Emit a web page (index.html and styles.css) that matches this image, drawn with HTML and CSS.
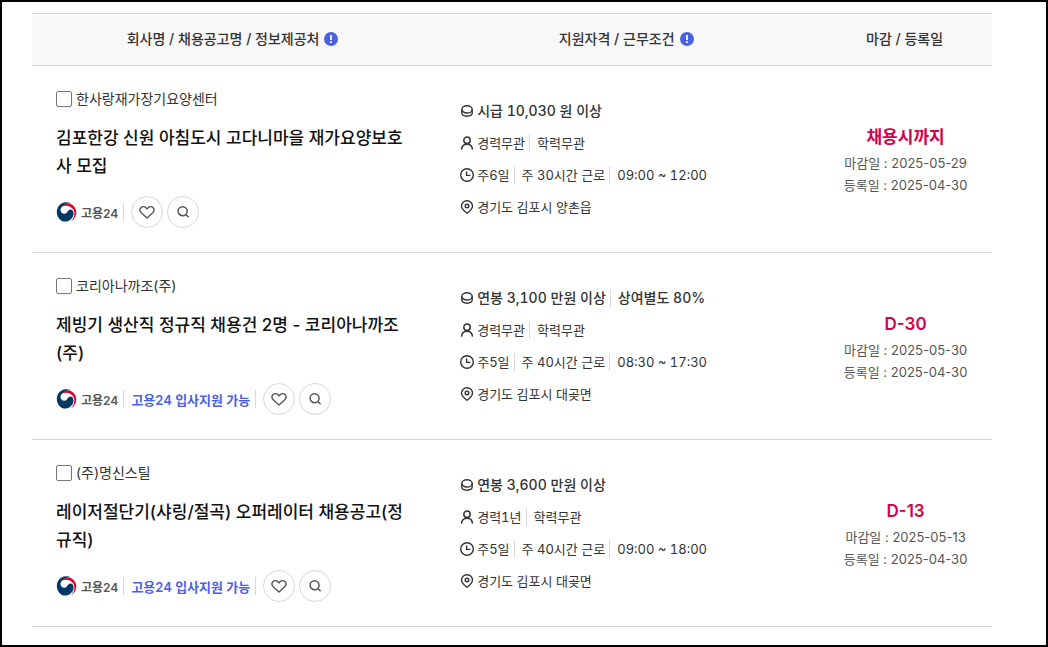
FILE: index.html
```html
<!DOCTYPE html>
<html lang="ko">
<head>
<meta charset="utf-8">
<meta name="viewport" content="width=device-width, initial-scale=1">
<title>채용정보</title>
<link rel="stylesheet" href="styles.css">
</head>
<body>
<svg class="sprite" aria-hidden="true">
  <symbol id="info" viewBox="0 0 14 14"><circle cx="7" cy="7" r="7" fill="#4b62df"/><path d="M7 3v5M7 9.300v1.800" stroke="#e8ebff" stroke-width="2"/></symbol>
  <symbol id="coin" viewBox="0 0 14 14"><g fill="none" stroke="currentColor" stroke-width="1.4"><ellipse cx="7" cy="5.4" rx="5.2" ry="3.600"/><path d="M1.800 5.400v3.400c0 2 2.100 3.400 5.200 3.400s5.200-1.400 5.200-3.400V5.400"/></g></symbol>
  <symbol id="person" viewBox="0 0 14 14"><g fill="none" stroke="currentColor" stroke-width="1.5"><circle cx="7" cy="4.2" r="3.2"/><path d="M1.500 13.600c.2-3.300 2.300-5.400 5.500-5.400s5.300 2.100 5.500 5.400"/></g></symbol>
  <symbol id="clock" viewBox="0 0 14 14"><g fill="none" stroke="currentColor" stroke-width="1.4"><circle cx="7" cy="7" r="6.3"/><path d="M6.600 3.400v4h3.800"/></g></symbol>
  <symbol id="pin" viewBox="0 0 14 14"><g fill="none" stroke="currentColor" stroke-width="1.4"><path d="M7 13.200C4.600 11.300 1.500 9 1.500 5.900a5.500 5.200 0 0 1 11 0C12.500 9 9.400 11.300 7 13.200z"/><circle cx="7" cy="6" r="1.800"/></g></symbol>
  <symbol id="heart" viewBox="0 0 16 16"><path d="M8 14L2.200 8.700C.8 7.200.7 5 2 3.600c1.400-1.400 3.600-1.300 4.900.1L8 4.900l1.100-1.200c1.300-1.400 3.500-1.500 4.900-.1 1.300 1.400 1.200 3.600-.2 5.100z" fill="none" stroke="currentColor" stroke-width="1.400" stroke-linejoin="round"/></symbol>
  <symbol id="search" viewBox="0 0 16 16"><g fill="none" stroke="currentColor" stroke-width="1.500"><circle cx="7.600" cy="7.200" r="4.500"/><path d="M10.800 10.500l2.800 2.800"/></g></symbol>
  <symbol id="taegeuk" viewBox="0 0 20 20"><path d="M5 4.800C8 1.200 13 .4 16.300 3.200C21.500 7.500 21 15.500 14.500 19.300C18 15.500 19 11 16.800 7.600C14.500 3.800 9.500 2.800 5 4.800z" fill="#e4002b"/><path d="M14.500 1.300C10-.9 4 .3 1.500 5C-1 10 .5 16 5 18.700C10 21.300 16 18 17 12.500C17.500 9.500 16 7.500 14 7.500C11 7.500 11.300 11.500 8 11.800C5 12 3.200 9.200 4.400 6.300C6 3 10 1.100 14.500 1.300z" fill="#003764"/></symbol>
</svg>

<main class="page">
  <table class="jobs">
    <colgroup><col class="col-company"><col class="col-terms"><col class="col-date"></colgroup>
    <thead>
      <tr>
        <th scope="col"><span class="heading">회사명 / 채용공고명 / 정보제공처 <button class="info" type="button" aria-label="정보제공처 안내"><svg><use href="#info"/></svg></button></span></th>
        <th scope="col"><span class="heading">지원자격 / 근무조건 <button class="info" type="button" aria-label="근무조건 안내"><svg><use href="#info"/></svg></button></span></th>
        <th scope="col"><span class="heading">마감 / 등록일</span></th>
      </tr>
    </thead>
    <tbody>
      <tr>
        <td class="company">
          <label class="name"><input type="checkbox">한사랑재가장기요양센터</label>
          <a class="title" href="#">김포한강 신원 아침도시 고다니마을 재가요양보호사 모집</a>
          <div class="source">
            <span class="provider"><svg><use href="#taegeuk"/></svg>고용24</span>
            <span class="actions"><button type="button" aria-label="관심"><svg><use href="#heart"/></svg></button><button type="button" aria-label="미리보기"><svg><use href="#search"/></svg></button></span>
          </div>
        </td>
        <td class="terms">
          <ul>
            <li class="pay"><svg><use href="#coin"/></svg><span>시급 10,030 원 이상</span></li>
            <li><svg><use href="#person"/></svg><span>경력무관</span><span>학력무관</span></li>
            <li><svg><use href="#clock"/></svg><span>주6일</span><span>주 30시간 근로</span><span>09:00 ~ 12:00</span></li>
            <li><svg><use href="#pin"/></svg><span>경기도 김포시 양촌읍</span></li>
          </ul>
        </td>
        <td class="dates"><strong>채용시까지</strong><p>마감일 : 2025-05-29</p><p>등록일 : 2025-04-30</p></td>
      </tr>
      <tr>
        <td class="company">
          <label class="name"><input type="checkbox">코리아나까조(주)</label>
          <a class="title" href="#">제빙기 생산직 정규직 채용건 2명 - 코리아나까조(주)</a>
          <div class="source">
            <span class="provider"><svg><use href="#taegeuk"/></svg>고용24</span>
            <span class="apply">고용24 입사지원 가능</span>
            <span class="actions"><button type="button" aria-label="관심"><svg><use href="#heart"/></svg></button><button type="button" aria-label="미리보기"><svg><use href="#search"/></svg></button></span>
          </div>
        </td>
        <td class="terms">
          <ul>
            <li class="pay"><svg><use href="#coin"/></svg><span>연봉 3,100 만원 이상</span><span>상여별도 80%</span></li>
            <li><svg><use href="#person"/></svg><span>경력무관</span><span>학력무관</span></li>
            <li><svg><use href="#clock"/></svg><span>주5일</span><span>주 40시간 근로</span><span>08:30 ~ 17:30</span></li>
            <li><svg><use href="#pin"/></svg><span>경기도 김포시 대곶면</span></li>
          </ul>
        </td>
        <td class="dates"><strong>D-30</strong><p>마감일 : 2025-05-30</p><p>등록일 : 2025-04-30</p></td>
      </tr>
      <tr>
        <td class="company">
          <label class="name"><input type="checkbox">(주)명신스틸</label>
          <a class="title" href="#">레이저절단기(샤링/절곡) 오퍼레이터 채용공고(정규직)</a>
          <div class="source">
            <span class="provider"><svg><use href="#taegeuk"/></svg>고용24</span>
            <span class="apply">고용24 입사지원 가능</span>
            <span class="actions"><button type="button" aria-label="관심"><svg><use href="#heart"/></svg></button><button type="button" aria-label="미리보기"><svg><use href="#search"/></svg></button></span>
          </div>
        </td>
        <td class="terms">
          <ul>
            <li class="pay"><svg><use href="#coin"/></svg><span>연봉 3,600 만원 이상</span></li>
            <li><svg><use href="#person"/></svg><span>경력1년</span><span>학력무관</span></li>
            <li><svg><use href="#clock"/></svg><span>주5일</span><span>주 40시간 근로</span><span>09:00 ~ 18:00</span></li>
            <li><svg><use href="#pin"/></svg><span>경기도 김포시 대곶면</span></li>
          </ul>
        </td>
        <td class="dates"><strong>D-13</strong><p>마감일 : 2025-05-13</p><p>등록일 : 2025-04-30</p></td>
      </tr>
    </tbody>
  </table>
</main>
</body>
</html>
```
FILE: styles.css
```css
* { box-sizing: border-box; }
body {
  margin: 0;
  background: #fff;
  color: #333;
  font-family: Inter, "Noto Sans CJK KR", sans-serif;
  font-size: 13px;
}
button { padding: 0; border: 0; background: none; color: inherit; font: inherit; cursor: pointer; }
svg { display: block; flex: none; }
.sprite { position: absolute; width: 0; height: 0; }

.page {
  min-height: 100vh;
  padding: 11px 54px 16px 30px;
  border: 2px solid #000;
}
.jobs {
  width: 100%;
  border-collapse: separate;
  border-spacing: 0;
  table-layout: fixed;
}
.col-company { width: 42%; }
.col-terms { width: 40%; }
.col-date { width: 18%; }

th {
  padding: 0 2px 2px 0;
  height: 53px;
  background: #f8f8f8;
  border-top: 1px solid #d8d8d8;
  border-bottom: 1px solid #d8d8d8;
  font-size: 14px;
  font-weight: 500;
}
.heading { display: flex; align-items: center; justify-content: center; gap: 5px; line-height: 20px; }
.info svg { width: 14px; height: 14px; }

td { padding: 24px; border-bottom: 1px solid #d8d8d8; vertical-align: middle; }
.name { display: flex; align-items: center; gap: 4px; font-size: 14px; line-height: 18px; }
.name input {
  appearance: none;
  width: 16px;
  height: 16px;
  margin: 0;
  border: 1px solid #767676;
  border-radius: 2px;
  background: #fff;
}
.title {
  display: block;
  margin: 16px 0;
  color: #111;
  font-size: 17px;
  font-weight: 500;
  line-height: 28px;
  text-decoration: none;
  word-break: break-all;
}
.source { display: flex; align-items: center; height: 32px; }
.source > * + * { display: flex; align-items: center; }
.source > * + *::before { content: ""; width: 1px; height: 18px; margin: 0 7px 0 5px; background: #d8d8d8; }
.provider { display: flex; align-items: center; gap: 4px; color: #555; font-size: 12px; font-weight: 600; }
.provider svg { width: 21px; height: 20px; }
.apply { color: #4b62df; font-weight: 600; }
.actions button {
  display: grid;
  place-items: center;
  width: 32px;
  height: 32px;
  border: 1px solid #d8d8d8;
  border-radius: 50%;
  color: #555;
}
.actions button + button { margin-left: 4px; }
.actions svg { width: 16px; height: 16px; }

.terms { padding-left: 25px; font-variant-numeric: tabular-nums; }
.terms ul { display: grid; gap: 8px; margin: 0; padding: 0; list-style: none; }
.terms li { display: flex; align-items: center; line-height: 24px; white-space: nowrap; }
.terms li svg { width: 14px; height: 14px; margin-right: 3px; }
.terms span + span { display: flex; align-items: center; }
.terms span + span::before { content: ""; width: 1px; height: 18px; margin: 0 7px 0 4px; background: #d8d8d8; }
.terms .pay { font-size: 14px; font-weight: 500; }

.dates { padding: 24px 0; color: #555; text-align: center; }
.dates strong { display: block; color: #d6004d; font-size: 17px; font-weight: 600; line-height: 30px; }
.dates p { margin: 0; line-height: 22px; }
```
